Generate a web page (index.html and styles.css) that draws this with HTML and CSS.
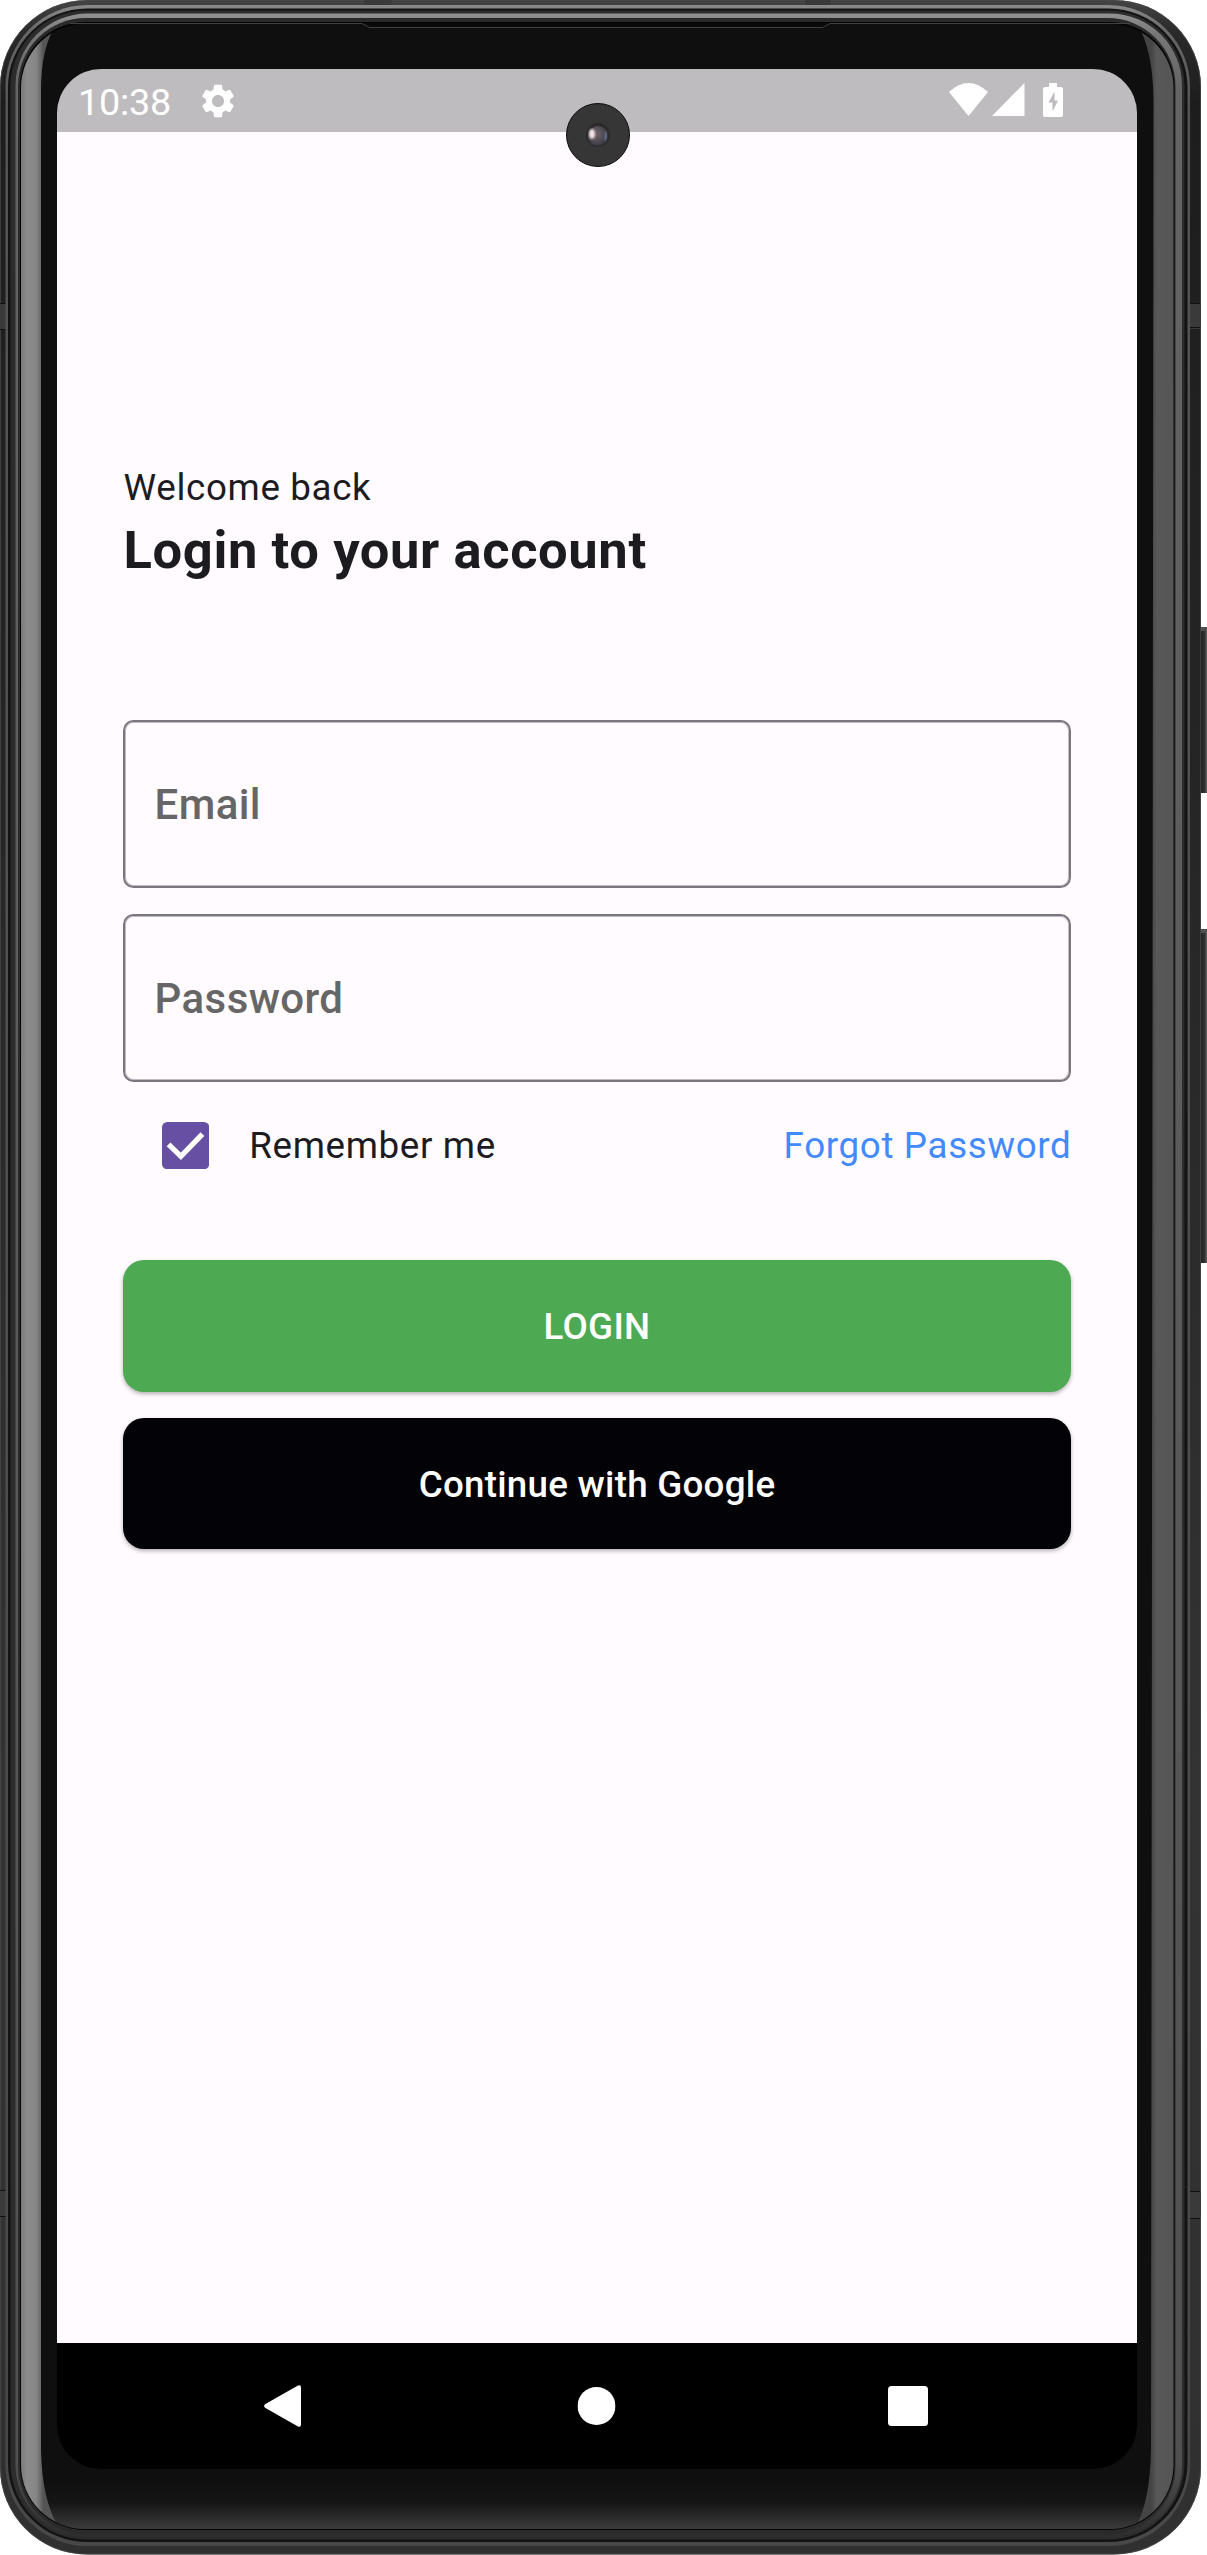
FILE: index.html
```html
<!DOCTYPE html>
<html lang="en">
<head>
<meta charset="utf-8">
<title>Login</title>
<link rel="stylesheet" href="styles.css">
</head>
<body>
<div class="device">
  <svg class="frame" width="1207" height="2555" viewBox="0 0 1207 2555" aria-hidden="true">
    <defs>
      <linearGradient id="edge" x1="0" y1="0" x2="0" y2="1"><stop offset="0" stop-color="#454545"/><stop offset=".012" stop-color="#2a2a2a"/><stop offset=".04" stop-color="#1d1d1d"/><stop offset=".3" stop-color="#252525"/><stop offset=".7" stop-color="#333"/><stop offset="1" stop-color="#303030"/></linearGradient>
      <linearGradient id="outerRim" x1="0" y1="0" x2="0" y2="1"><stop offset="0" stop-color="#8a8a8a"/><stop offset=".01" stop-color="#686868"/><stop offset=".04" stop-color="#545454"/><stop offset="1" stop-color="#484848"/></linearGradient>
      <linearGradient id="innerRim" x1="0" y1="0" x2="0" y2="1"><stop offset="0" stop-color="#929292"/><stop offset=".008" stop-color="#777"/><stop offset=".03" stop-color="#646464"/><stop offset=".97" stop-color="#505050"/><stop offset="1" stop-color="#2c2c2c"/></linearGradient>
      <linearGradient id="glareLeft" gradientUnits="userSpaceOnUse" x1="20" y1="0" x2="43" y2="0"><stop offset="0" stop-color="#777"/><stop offset=".3" stop-color="#8c8c8c"/><stop offset=".7" stop-color="#868686"/><stop offset=".9" stop-color="#6a6a6a"/><stop offset="1" stop-color="#555"/></linearGradient>
      <linearGradient id="glareRight" gradientUnits="userSpaceOnUse" x1="1151" y1="0" x2="1174" y2="0"><stop offset="0" stop-color="#444"/><stop offset=".25" stop-color="#585858"/><stop offset="1" stop-color="#555"/></linearGradient>
      <linearGradient id="glareBottom" gradientUnits="userSpaceOnUse" x1="0" y1="2480" x2="0" y2="2530"><stop offset="0" stop-color="#0f0f0f"/><stop offset=".45" stop-color="#151515"/><stop offset="1" stop-color="#3c3c3c"/></linearGradient>
      <linearGradient id="key" gradientUnits="userSpaceOnUse" x1="1199" y1="0" x2="1207" y2="0"><stop offset="0" stop-color="#1e1e1e"/><stop offset=".7" stop-color="#303030"/><stop offset="1" stop-color="#666"/></linearGradient>
      <clipPath id="glass"><rect x="21" y="24" width="1152.500" height="2505" rx="64"/></clipPath>
    </defs>
    <path d="M1199 627h8v166h-8zM1199 929h8v334h-8z" fill="url(#key)"/>
    <path d="M1199 627h8v4h-8zM1199 929h8v4h-8z" fill="#505050"/>
    <rect width="1201" height="2554.500" rx="87" fill="url(#edge)"/>
    <rect x=".5" y=".5" width="1200" height="2553.500" rx="86.500" fill="none" stroke="#4a4a4a" stroke-opacity=".7"/>
    <g fill="#3a3a3a"><path d="M0 303h7v27H0zM1189 303h12v26h-12zM0 2190h7v27H0zM1189 2192h12v26h-12zM364 0h28l-2 8h-25zM805 0h26v8h-26z"/></g>
    <path d="M0 303.500h6M0 329.500h6M0 2190.500h6M0 2216.500h6M1190 303.500h10M1190 327.500h10M1190 2191.500h10M1190 2218.500h10" stroke="#111"/>
    <rect x="5.500" y="5" width="1184.500" height="2541" rx="82" fill="url(#outerRim)"/>
    <rect x="8" y="8.500" width="1179.500" height="2533.500" rx="79" fill="#131313"/>
    <rect x="10.500" y="10.500" width="1174" height="2529" rx="76" fill="#2c2c2c"/>
    <rect x="15.500" y="13.500" width="1166.500" height="2524" rx="72" fill="url(#innerRim)"/>
    <rect x="18" y="18" width="1157.500" height="2516" rx="68" fill="#2a2a2a"/>
    <rect x="20" y="22" width="1154.500" height="2508" rx="65" fill="#050505"/>
    <g clip-path="url(#glass)">
      <path d="M0 0h1207v2555H0z" fill="#0f0f0f"/>
      <path d="M0 2480h1207v75H0z" fill="url(#glareBottom)"/>
      <path d="M18 22h40Q41 45 41 90V2450Q42 2500 58 2526L18 2532z" fill="url(#glareLeft)"/>
      <path d="M1176 22h-40Q1153 48 1153.500 100L1151 2450Q1150 2500 1137 2524L1176 2532z" fill="url(#glareRight)"/>
    </g>
    <path d="M70 23.500h292l8 4h452l8-4h300" fill="none" stroke="#404040"/>
    <path d="M364 23l6 4h452l7-4z" fill="#090909"/>
  </svg>

  <main class="screen">
    <header class="status">
      <span class="clock">10:38</span>
      <svg class="gear" viewBox="2.500 2 19 20"><path d="M19.140 12.940c.04-.3.060-.61.060-.94 0-.32-.02-.64-.07-.94l2.030-1.580a.49.490 0 0 0 .12-.61l-1.920-3.320a.488.488 0 0 0-.59-.22l-2.390.96c-.5-.38-1.030-.7-1.620-.94l-.36-2.540a.484.484 0 0 0-.48-.41h-3.840c-.24 0-.43.170-.47.410l-.36 2.540c-.59.240-1.130.570-1.620.940l-2.390-.96c-.22-.08-.47 0-.59.220L2.740 8.870c-.12.210-.08.470.12.610l2.030 1.580c-.05.300-.09.630-.09.940s.02.640.070.940l-2.030 1.580a.49.490 0 0 0-.12.610l1.920 3.320c.12.220.37.290.59.220l2.390-.96c.5.380 1.030.700 1.620.940l.36 2.540c.05.240.24.410.48.410h3.840c.24 0 .44-.17.470-.41l.36-2.540c.59-.24 1.130-.56 1.620-.94l2.390.960c.22.080.470 0 .59-.22l1.920-3.320c.12-.22.070-.47-.12-.61l-2.010-1.580zM12 15.600c-1.980 0-3.600-1.620-3.600-3.600s1.620-3.600 3.600-3.600 3.600 1.620 3.600 3.600-1.620 3.600-3.600 3.600z"/></svg>
      <svg class="wifi" viewBox="0 0 39 33"><path d="M0 9Q19.500-9 39 9L19.500 33z"/></svg>
      <svg class="signal" viewBox="0 0 33 33"><path d="M0 33H32.500V0z"/></svg>
      <svg class="battery" viewBox="0 0 20 34"><path fill-rule="evenodd" d="M6 0h8v4h4q2 0 2 2v26q0 2-2 2H2q-2 0-2-2V6q0-2 2-2h4zM11.500 8.500L5.500 19.500H9.500V28.500L15 17.500H11.500z"/></svg>
    </header>

    <section class="content">
      <p class="welcome">Welcome back</p>
      <h1 class="title">Login to your account</h1>
      <div class="field"><span>Email</span></div>
      <div class="field"><span>Password</span></div>
      <div class="options">
        <svg class="checkbox" viewBox="0 0 18 18"><rect width="18" height="18" rx="2"/><path d="M2.500 8.500L7.200 13.100L15.400 4.600" fill="none" stroke="#fff" stroke-width="2"/></svg>
        <span class="remember">Remember me</span>
        <a class="forgot">Forgot Password</a>
      </div>
      <div class="button login"><span>LOGIN</span></div>
      <div class="button google"><span>Continue with Google</span></div>
    </section>

    <nav class="nav">
      <svg class="back" viewBox="0 0 37 42"><path d="M1 19.300L34 .500Q37-.5 37 2.500V39.500Q37 42.500 34 41.500L1 22.700Q-.7 21 1 19.300z"/></svg>
      <svg class="home" viewBox="0 0 38 38"><circle cx="19" cy="19" r="19"/></svg>
      <svg class="recents" viewBox="0 0 40 40"><rect width="40" height="40" rx="3.500"/></svg>
    </nav>
  </main>

  <svg class="camera" viewBox="0 0 64 64">
    <defs>
      <radialGradient id="lens" cx=".4" cy=".4" r=".65"><stop offset="0" stop-color="#71656b"/><stop offset=".6" stop-color="#514a52"/><stop offset="1" stop-color="#323339"/></radialGradient>
      <filter id="soft"><feGaussianBlur stdDeviation="1.200"/></filter>
    </defs>
    <circle cx="32" cy="32" r="31.500" fill="#363636" stroke="#0c0c0c"/>
    <circle cx="32" cy="32" r="12" fill="#2c2b2c"/>
    <circle cx="32" cy="33" r="10" fill="url(#lens)"/>
    <ellipse cx="26" cy="31" rx="3" ry="5" fill="#f5e6e8" filter="url(#soft)"/>
    <path d="M40 29q1.500 4-1.500 8" fill="none" stroke="#6386ae" stroke-width="2" filter="url(#soft)"/>
  </svg>
</div>
</body>
</html>
```
FILE: styles.css
```css
* { box-sizing: border-box; }
body { margin: 0; background: #fff; font-family: Roboto, sans-serif; overflow: hidden; }
p, h1 { margin: 0; }
svg { display: block; flex: none; }

.device { position: relative; display: grid; width: 1207px; height: 2555px; }
.frame, .screen { grid-area: 1 / 1; }
.screen {
  display: flex; flex-direction: column;
  width: 1080px; height: 2400px; margin: 69px 0 0 57px;
  border-radius: 44px; overflow: hidden; z-index: 1;
}

.status { display: flex; height: 63px; padding: 14px 74px 0 21px; background: #bfbcbf; fill: #fff; color: #fff; }
.clock { width: 124px; font-size: 37.800px; line-height: 38px; letter-spacing: -.2px; white-space: nowrap; }
.gear { width: 32px; height: 34px; margin-top: 1px; }
.wifi { width: 39px; height: 33px; margin-left: auto; }
.signal { width: 33px; height: 33px; margin-left: 4px; }
.battery { width: 20px; height: 34px; margin-left: 18px; }

.content { flex: 1; padding: 334px 65.600px 0; background: #fffbff; color: #1c1b1f; }
.welcome { padding-left: 1px; font-size: 36.750px; line-height: 43px; letter-spacing: .650px; }
.title { margin-top: 11px; padding-left: 1px; font-size: 52.500px; line-height: 61px; font-weight: 700; letter-spacing: .6px; }
.field {
  display: flex; align-items: center; height: 168px; padding: 2px 0 0 30px;
  border: 2px solid #7a757f; border-radius: 10.500px; box-shadow: inset 0 0 0 1px #bfbbc2;
  color: #666; font-size: 42px; font-weight: 500; line-height: 50px; letter-spacing: .4px;
}
.title + .field { margin-top: 139px; }
.field + .field { margin-top: 26.250px; }
.options { display: flex; align-items: center; height: 126px; padding-left: 39.400px; font-size: 36.750px; letter-spacing: .650px; }
.checkbox { width: 47.250px; height: 47.250px; fill: #6750a4; }
.remember { margin-left: 40px; }
.forgot { margin-left: auto; color: #448aff; }
.button {
  display: flex; align-items: center; justify-content: center; height: 131.250px; padding-top: 2px;
  border-radius: 21px; color: #fff; font-size: 36.750px; font-weight: 500; letter-spacing: .250px;
  box-shadow: 0 2px 4px rgba(0, 0, 0, .3);
}
.login { margin-top: 52px; background: #4daa53; }
.google { margin-top: 26.250px; background: #030207; }

.nav { display: flex; align-items: center; height: 126px; padding: 0 209px 0 207px; background: #000; fill: #fff; }
.back { width: 37px; height: 42px; }
.home { width: 38px; height: 38px; margin: 0 auto; transform: translateX(1.500px); }
.recents { width: 40px; height: 40px; }

.camera { position: absolute; left: 566px; top: 103px; width: 64px; height: 64px; z-index: 2; }
```
